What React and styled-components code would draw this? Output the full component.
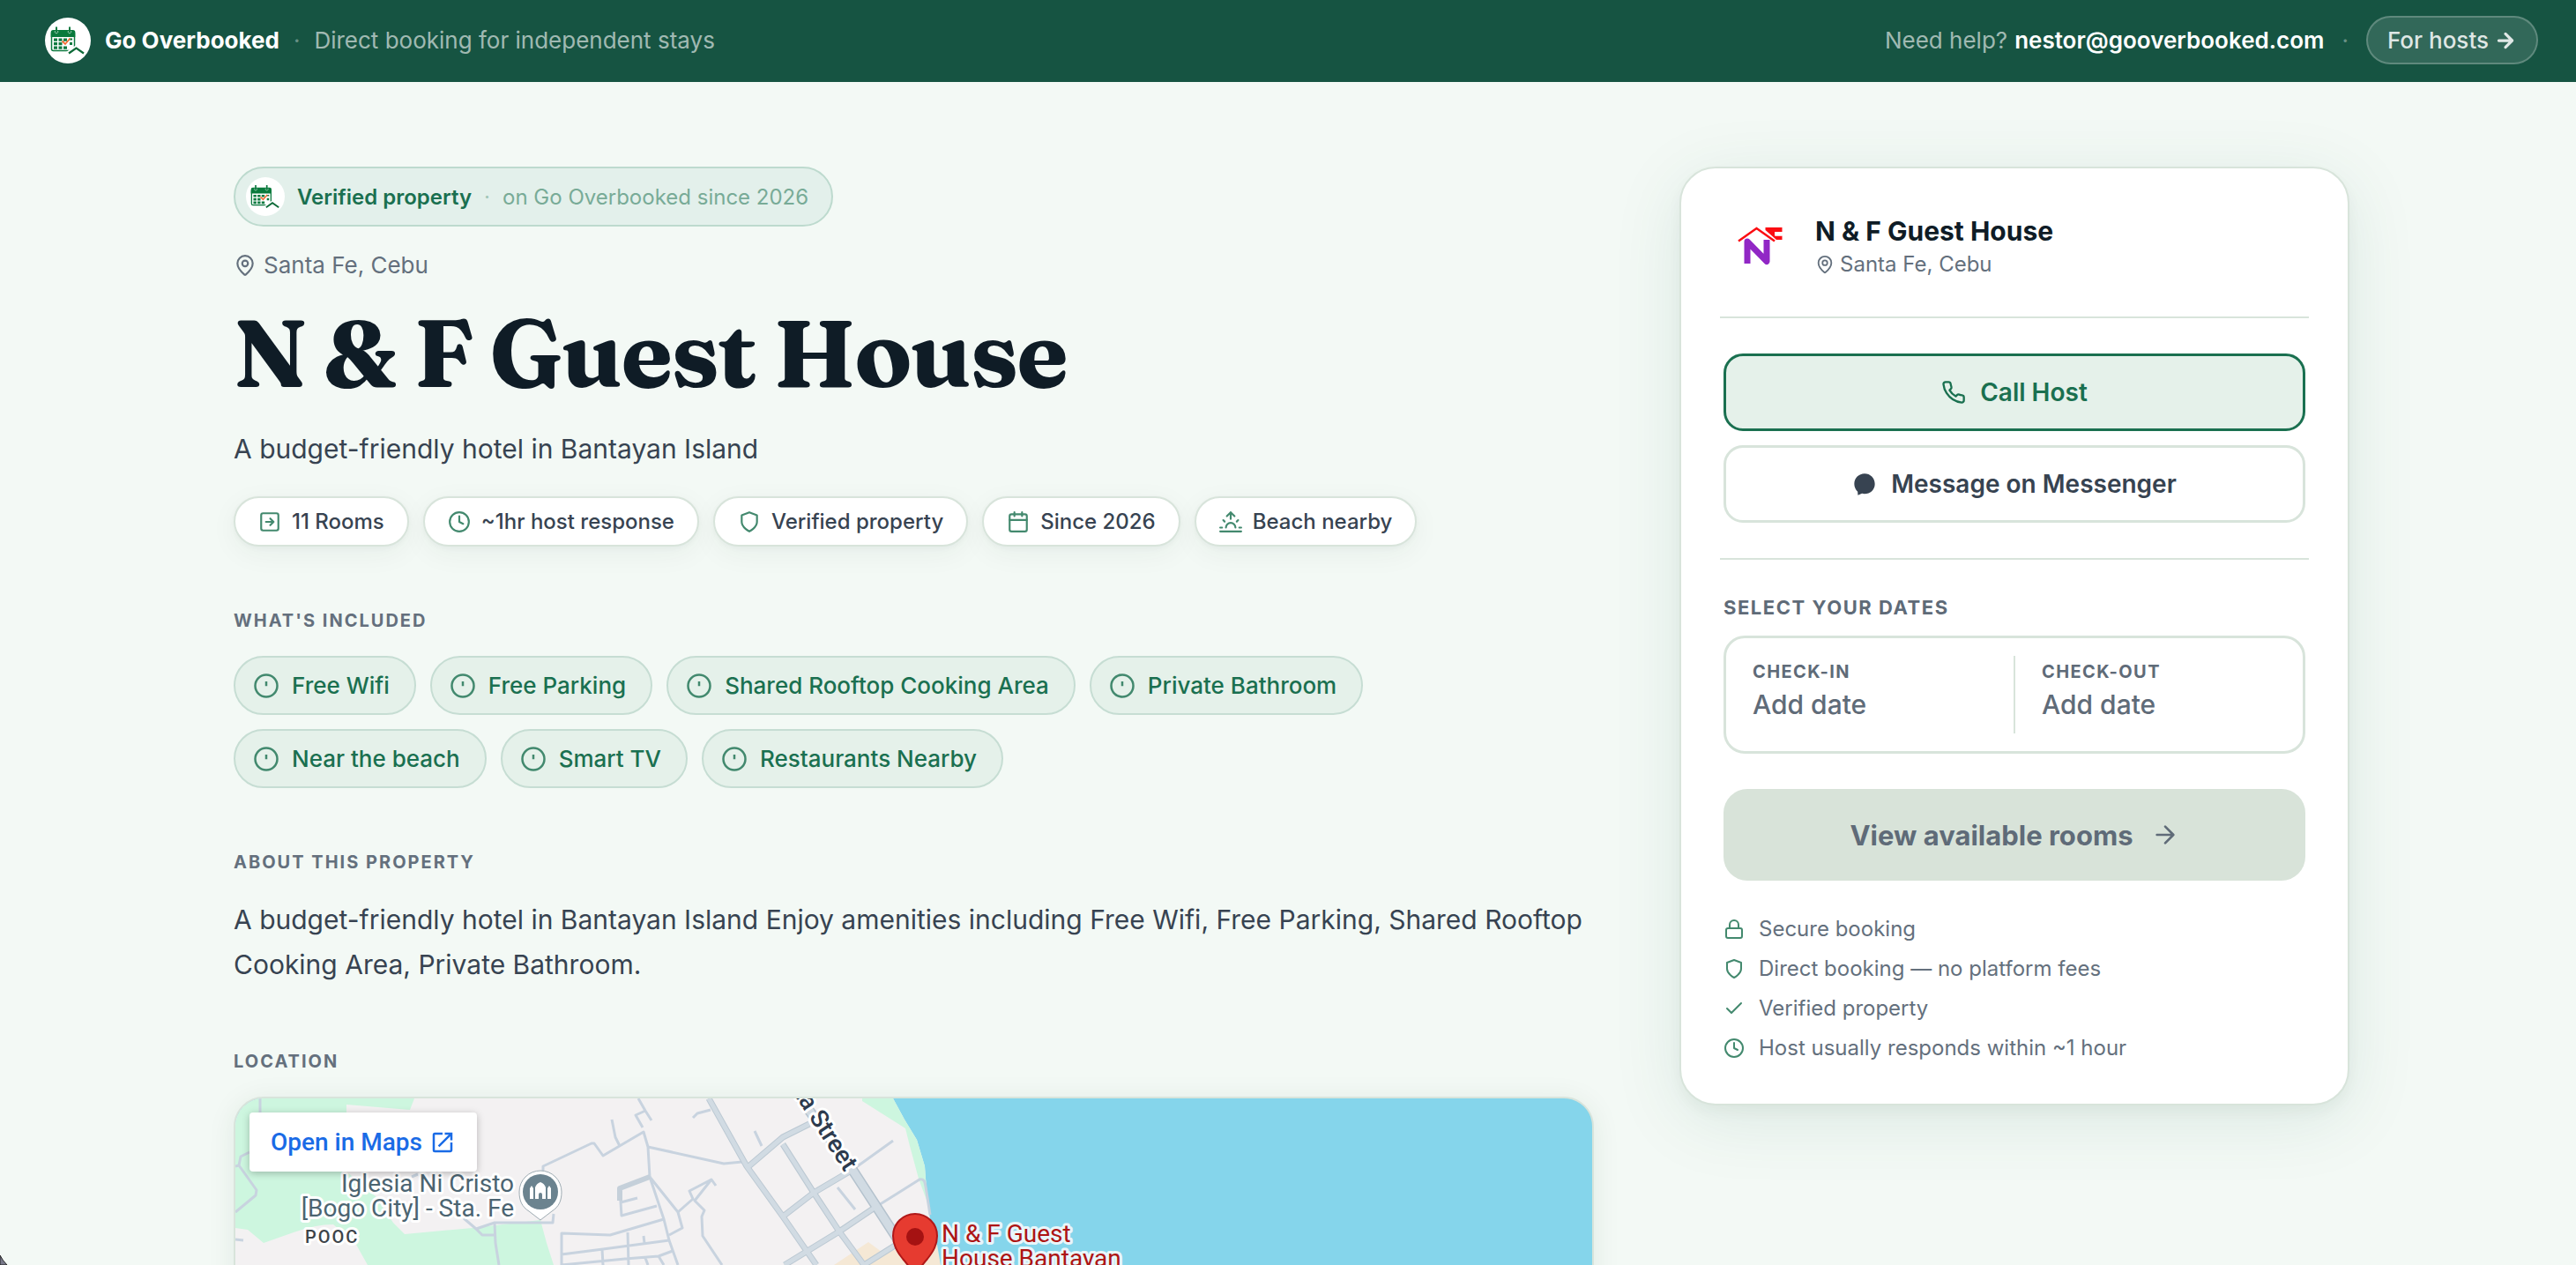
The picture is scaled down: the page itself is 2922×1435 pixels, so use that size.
import React from "react";
import styled, { createGlobalStyle, css } from "styled-components";

const GlobalStyle = createGlobalStyle`
    * { box-sizing: border-box; }
    body {
        margin: 0;
        background: #f3f9f5;
        color: #374351;
        font-family: Inter, "Liberation Sans", sans-serif;
        -webkit-font-smoothing: antialiased;
    }
    h1, h2, p, ul { margin: 0; padding: 0; }
    button { font-family: inherit; cursor: pointer; }
    a { text-decoration: none; color: inherit; }
    svg { display: block; flex-shrink: 0; }
`

const Page = styled.div`
    height: 100vh;
    overflow: hidden;
`

const Header = styled.header`
    display: flex;
    align-items: center;
    justify-content: space-between;
    height: 93px;
    padding: 0 43px 2px 51px;
    background: #165442;
    color: rgba(255, 255, 255, 0.6);
    font-size: 26px;
    line-height: 36px;
`

const HeaderGroup = styled.div`
    display: flex;
    align-items: center;
`

const LogoCircle = styled.span`
    display: flex;
    width: ${(props) => props.size}px;
    height: ${(props) => props.size}px;
    border-radius: 50%;
    overflow: hidden;
    background: white;
`

const Brand = styled.a`
    display: flex;
    align-items: center;
    gap: 16px;
    color: white;
    font-weight: 700;
`

const Dot = styled.span`
    margin: 0 ${(props) => props.space}px;
    opacity: 0.6;
`

const HelpLink = styled.a`
    margin-left: 8px;
    color: white;
    font-weight: 600;
`

const HostsLink = styled.a`
    display: flex;
    align-items: center;
    gap: 6px;
    height: 55px;
    padding: 0 22px;
    border: 2px solid rgba(255, 255, 255, 0.22);
    border-radius: 28px;
    background: rgba(255, 255, 255, 0.12);
    color: rgba(255, 255, 255, 0.85);
    font-weight: 500;
`

const Content = styled.div`
    padding: 96px 0 96px 8px;
`

const Main = styled.main`
    display: flex;
    align-items: flex-start;
    gap: 97px;
    max-width: 2400px;
    margin: 0 auto;
`

const Info = styled.div`
    flex: 1;
    min-width: 0;
`

const Badge = styled.div`
    display: inline-flex;
    align-items: center;
    height: 68px;
    padding: 0 26px 0 12px;
    border: 2px solid #bddace;
    border-radius: 34px;
    background: #e3f0eb;
    color: #78ab97;
    font-size: 24px;
`

const BadgeTitle = styled.b`
    margin-left: 14px;
    color: #1a7050;
    font-weight: 600;
`

const Place = styled.div`
    display: flex;
    align-items: center;
    gap: 8px;
    margin-top: 27px;
    color: #64707d;
    font-size: 26px;
    line-height: 34px;
`

const Title = styled.h1`
    margin-top: 22px;
    color: #0f1c26;
    font-family: Fraunces, "Liberation Serif", serif;
    font-size: 107px;
    font-weight: 700;
    letter-spacing: -2px;
    line-height: 120px;
`

const Tagline = styled.p`
    margin-top: 25px;
    font-size: 30px;
    line-height: 48px;
`

const Facts = styled.ul`
    display: flex;
    flex-wrap: wrap;
    gap: 16px;
    margin-top: 30px;
    list-style: none;
`

const Fact = styled.li`
    display: flex;
    align-items: center;
    gap: 12px;
    height: 57px;
    padding: 0 26px;
    border: 2px solid #d8e4db;
    border-radius: 29px;
    background: white;
    box-shadow: 0 2px 6px rgba(15, 60, 40, 0.04), 0 8px 32px rgba(15, 60, 40, 0.05);
    font-size: 24px;
    font-weight: 500;
    svg { color: #43896e; }
`

const Section = styled.section`
    margin-top: 70px;
`

const SectionTitle = styled.h2`
    margin-bottom: 26px;
    color: #64707d;
    font-size: 20px;
    font-weight: 700;
    letter-spacing: 2px;
    line-height: 28px;
    text-transform: uppercase;
`

const Tags = styled.ul`
    display: flex;
    flex-wrap: wrap;
    gap: 16px;
    list-style: none;
`

const Tag = styled.li`
    display: flex;
    align-items: center;
    gap: 14px;
    height: 67px;
    padding: 0 28px 0 20px;
    border: 2px solid #c6ddd3;
    border-radius: 34px;
    background: #e5f1ea;
    color: #1a7050;
    font-size: 26px;
    font-weight: 500;
    svg { opacity: 0.8; }
`

const About = styled.p`
    font-size: 30px;
    line-height: 51px;
`

const Map = styled.div`
    position: relative;
    height: 560px;
    border: 2px solid #d8e4db;
    border-radius: 34px;
    overflow: hidden;
    background: #85d5eb;
    box-shadow: 0 4px 32px rgba(15, 60, 40, 0.08);
`

const MapLink = styled.a`
    position: absolute;
    top: 16px;
    left: 16px;
    display: flex;
    align-items: center;
    gap: 8px;
    height: 67px;
    padding: 0 24px;
    border-radius: 4px;
    background: white;
    box-shadow: 0 2px 8px rgba(0, 0, 0, 0.25);
    color: #1a6be6;
    font-family: Roboto, sans-serif;
    font-size: 28px;
    font-weight: 500;
`

const Card = styled.aside`
    width: 760px;
    padding: 46px 48px 49px;
    border: 2px solid #d8e4db;
    border-radius: 41px;
    background: white;
    box-shadow: 0 8px 16px rgba(15, 40, 30, 0.04), 0 16px 80px rgba(20, 90, 65, 0.1);
`

const CardHeader = styled.div`
    display: flex;
    align-items: center;
    gap: 22px;
`

const CardName = styled.div`
    padding-top: 4px;
    color: #0f1c26;
    font-size: 30px;
    font-weight: 700;
    line-height: 40px;
`

const CardPlace = styled.div`
    display: flex;
    align-items: center;
    gap: 6px;
    color: #64707d;
    font-size: 24px;
    line-height: 36px;
`

const Divider = styled.hr`
    height: 2px;
    margin: 40px -4px;
    border: none;
    background: #d8e4db;
`

const CardButton = styled.button`
    display: flex;
    align-items: center;
    justify-content: center;
    gap: 16px;
    width: 100%;
    height: 88px;
    border: 3px solid #d8e4db;
    border-radius: 22px;
    background: white;
    color: #374351;
    font-size: 28px;
    font-weight: 600;
    & + & { margin-top: 16px; }
    ${(props) => props.$primary && css`
        border-color: #1a7050;
        background: #e5f1ea;
        color: #1a7050;
    `}
`

const DatesTitle = styled.h2`
    margin-top: -1px;
    margin-bottom: 17px;
    color: #5f6b78;
    font-size: 22px;
    font-weight: 700;
    letter-spacing: 0.07em;
    line-height: 30px;
    text-transform: uppercase;
`

const Dates = styled.div`
    display: flex;
    height: 134px;
    border: 3px solid #d8e4db;
    border-radius: 24px;
`

const DateButton = styled.button`
    flex: 1;
    display: flex;
    flex-direction: column;
    align-items: flex-start;
    gap: 7px;
    padding: 26px 30px;
    border: none;
    background: none;
    color: #5f6b78;
    font-size: 30px;
    font-weight: 500;
    line-height: 36px;
`

const DateLabel = styled.span`
    font-size: 20px;
    font-weight: 700;
    letter-spacing: 0.07em;
    line-height: 24px;
`

const DateDivider = styled.span`
    width: 2px;
    margin: 20px 0;
    background: #d8e4db;
`

const RoomsButton = styled.button`
    display: flex;
    align-items: center;
    justify-content: center;
    gap: 20px;
    width: 100%;
    height: 104px;
    margin: 40px 0 41px;
    border: none;
    border-radius: 27px;
    background: #d8e3d9;
    color: #5f6b78;
    font-size: 31px;
    font-weight: 700;
`

const Perks = styled.ul`
    display: flex;
    flex-direction: column;
    gap: 17px;
    list-style: none;
`

const Perk = styled.li`
    display: flex;
    align-items: center;
    gap: 16px;
    color: #64707d;
    font-size: 24px;
    line-height: 28px;
    svg { color: #43896e; }
`

const WindowCorner = styled.svg`
    position: fixed;
    left: 0;
    bottom: 0;
`

const shapes = {
    pin: <><path d="M20 10c0 5-5.500 10.200-7.400 11.800a1 1 0 0 1-1.200 0C9.500 20.200 4 15 4 10a8 8 0 0 1 16 0" /><circle cx="12" cy="10" r="3" /></>,
    rooms: <><rect x="3" y="3" width="18" height="18" rx="2" /><path d="M8 12h8M12.500 8.500 16 12l-3.500 3.500" /></>,
    clock: <><circle cx="12" cy="12" r="10" /><path d="M12 6v6l4 2" /></>,
    shield: <path d="M12 22s8-4 8-10V5l-8-3-8 3v7c0 6 8 10 8 10z" />,
    calendar: <><rect x="3" y="4" width="18" height="18" rx="2" /><path d="M16 2v4M8 2v4M3 10h18" /></>,
    beach: <path d="M17 18a5 5 0 0 0-10 0M12 2v7M4.220 10.220l1.420 1.420M1 18h2M21 18h2M18.360 11.640l1.420-1.420M23 22H1M8 6l4-4 4 4" />,
    info: <><circle cx="12" cy="12" r="10" /><path d="M12 8v4.200" strokeLinecap="butt" /></>,
    phone: <path d="M22 16.920v3a2 2 0 0 1-2.180 2 19.790 19.790 0 0 1-8.630-3.070 19.500 19.500 0 0 1-6-6 19.790 19.790 0 0 1-3.070-8.670A2 2 0 0 1 4.110 2h3a2 2 0 0 1 2 1.720 12.840 12.840 0 0 0 .7 2.810 2 2 0 0 1-.45 2.110L8.090 9.910a16 16 0 0 0 6 6l1.270-1.270a2 2 0 0 1 2.110-.45 12.840 12.840 0 0 0 2.810.7A2 2 0 0 1 22 16.920z" />,
    chat: <path fill="currentColor" stroke="none" d="M12 2C6.500 2 2 6.300 2 12c0 3 1.300 5.600 3.300 7.400L5.500 23l4-1.700c.8.200 1.600.3 2.500.3 5.500 0 10-4 10-9.700S17.500 2 12 2z" />,
    arrow: <path d="M5 12h14M12 5l7 7-7 7" />,
    lock: <><rect x="3" y="11" width="18" height="11" rx="2" /><path d="M7 11V7a5 5 0 0 1 10 0v4" /></>,
    check: <path d="M20 6 9 17l-5-5" />,
};

const Icon = ({ name, size, width = 2 }) => (
    <svg width={size} height={size} viewBox="0 0 24 24" fill="none" stroke="currentColor" strokeWidth={width} strokeLinecap="round" strokeLinejoin="round" aria-hidden="true">
        {shapes[name]}
    </svg>
);

const CalendarLogo = () => (
    <svg width="100%" height="100%" viewBox="0 0 52 52" aria-hidden="true">
        <rect x="7.500" y="16" width="26" height="21.500" rx="2" fill="white" stroke="#0d7a40" strokeWidth="1.500" />
        <path d="M6.700 22v-5.500a2.500 2.500 0 0 1 2.500-2.500h22.600a2.500 2.500 0 0 1 2.500 2.500V22z" fill="#087a3c" />
        <path d="M13 10.500v6M28 10.500v6" stroke="#0d7a40" strokeWidth="2" />
        <path d="M11.500 15a1.800 1.800 0 1 0 3 0M26.500 15a1.800 1.800 0 1 0 3 0" fill="none" stroke="#b5d8c4" strokeWidth="0.800" />
        <path d="M10 23.500h4v3.200h-4zM15.500 23.500h4v3.200h-4zM21 23.500h4v3.200h-4zM27.500 23.500h3.500v2h-3.500zM10 28h4v3.200h-4zM15.500 28h4v3.200h-4zM28 28h3v3h-3zM10 32.500h4v3.200h-4zM15.500 32.500h4v3.200h-4zM21 32.500h4v3.200h-4z" fill="#0d7a40" />
        <path d="M19.500 26.500l3.500 3.500 5.500-6.500" fill="none" stroke="#f36c32" strokeWidth="1.800" />
        <path d="M24 42l11.500-8L46 41.500" fill="none" stroke="white" strokeWidth="5" />
        <path d="M27 40.500l8.500-6L44 40.500" fill="none" stroke="#0d6a38" strokeWidth="2.200" />
    </svg>
);

const HouseLogo = () => (
    <svg width="82" height="82" viewBox="0 0 82 82" aria-hidden="true">
        <path d="M17 36.500 37.500 22 58 36.500" fill="none" stroke="#fb0d12" strokeWidth="2.500" />
        <path d="M47.500 21h19v5H58v4.500h8.500V35H60L47.500 24z" fill="#fb0d12" />
        <path d="M58 26h8.500v4.500H59z" fill="white" />
        <path d="M27 62V37l22 22.500V35" fill="none" stroke="#9127c5" strokeWidth="7" strokeLinejoin="round" />
    </svg>
);

const minorRoads = [
    "M28 0v16M0 77l4-1 20 28-1 6L0 129M4 76l2-10 10-5M0 160l9 1M207 86l-7 3",
    "M259 136l14 12 21-7h66l1-10M273 148l7 7h14M294 141l1 23 4 25",
    "M457 0l8 14 7 11M465 14l-11 5 8 14M427 24l4 20 5 10",
    "M349 82v-5l55-26h3l10 14 46-27 5 17 2 34 32 40 5 18-15 8M468 55l86 19 21-2",
    "M436 102l2 31 40-11M437 118l19-5M470 89l16 48 6 24 10 28",
    "M502 129l17-15-4-9 25-13 5 7M540 92l-19 24 11 11-3 7 1 22 22 33",
    "M370 189v-36l55 2 61-18M370 177l47-6 75-10M370 189l72-7 38-3 16-6M416 171l1 18M445 152l1 37M465 181l3 8M480 179l6 10M463 156l1 8",
    "M589 37l8 17M683 101l20 25M519 22l5-5 15-4M700 81l46-33M725 124l51-32q6-2 7 8l5 32",
];

const townRoads = "M537 0l43 77 41 57 38 55M580 79l41-35 30-15M621 52l35 55 29 44 28 38M621 134l35-27 44-26M623 189l62-38 40-27M713 189l35-22";

const MapDrawing = () => (
    <svg width="100%" height="560" fontFamily="Roboto, sans-serif" fontSize="28" strokeLinejoin="round">
        <path d="M0 0h746l13 24 14 23 9 30 1 14 3 30 3 26 3 20 7 22v371H0z" fill="#f3f1f2" />
        <path d="M0 0h203l-5 13-72-6v76l33 28 20 30 13 13 77-7 77-9 7 26 8 25H150l-14-25-25-21q-20 0-45 9l-34 12-18-15-14-2zM711 0h35l13 24 14 23 9 30 1 14 3 30-11-30-10-37-5-20-49-31z" fill="#cdf6df" />
        <path d="M679 189l39-26 15 11 63-8 4 23z" fill="#f5e8d5" />
        <g fill="none" stroke="#c8d3df" strokeWidth="3">
            {minorRoads.map((d) => <path key={d} d={d} />)}
        </g>
        <path d="M470 89l-34 13v14" fill="none" stroke="#c5d0da" strokeWidth="6" />
        <path d={townRoads} fill="none" stroke="#bcc9d3" strokeWidth="7" />
        <path d="M638-4l62 85 52 80" fill="none" stroke="#b4c2cd" strokeWidth="12" />
        <path d={townRoads} fill="none" stroke="#d1dbe3" strokeWidth="5" />
        <path d="M638-4l62 85 52 80" fill="none" stroke="#d1dbe3" strokeWidth="9" />
        <g paintOrder="stroke" stroke="white" strokeWidth="6">
            <text x="691" y="84" textAnchor="end" transform="rotate(57 691 84)" fill="#2d3b4e" fontWeight="500">ta Street</text>
            <text x="316" y="106" textAnchor="end" fill="#4b6471">Iglesia Ni Cristo</text>
            <text x="316" y="134" textAnchor="end" fill="#4b6471">[Bogo City] - Sta. Fe</text>
            <text x="79" y="164" fill="#3d4449" fontSize="20" fontWeight="500" letterSpacing="2">POOC</text>
            <text x="801" y="163" fill="#ad1414" stroke="#e9f6fa">N &amp; F Guest</text>
            <text x="801" y="191" fill="#ad1414" stroke="#e9f6fa">House Bantayan</text>
        </g>
        <path d="M346 138l-13-10c-8-5-11-12-11-22a24 24 0 0 1 48 0c0 10-3 17-11 22z" fill="white" stroke="#9eabb2" strokeWidth="1" />
        <circle cx="346" cy="106" r="20" fill="#6b838f" />
        <path d="M334 114v-12l2-3 2 3v12zM354 114v-12l2-3 2 3v12zM340 114v-13c1-3 3-5 6-6 3 1 5 3 6 6v13h-4v-5a2 2 0 0 0-4 0v5z" fill="white" />
        <path d="M771 212c-2-16-7-22-14-30-7-9-11-16-11-26a25 25 0 0 1 50 0c0 10-4 17-11 26-7 8-12 14-14 30z" fill="#e63b30" stroke="#b01818" strokeWidth="2" />
        <circle cx="771" cy="157" r="10" fill="#a51212" />
    </svg>
);

const facts = [
    ["rooms", "11 Rooms"],
    ["clock", "~1hr host response"],
    ["shield", "Verified property"],
    ["calendar", "Since 2026"],
    ["beach", "Beach nearby"],
];

const amenities = [
    "Free Wifi",
    "Free Parking",
    "Shared Rooftop Cooking Area",
    "Private Bathroom",
    "Near the beach",
    "Smart TV",
    "Restaurants Nearby",
];

const perks = [
    ["lock", "Secure booking"],
    ["shield", "Direct booking — no platform fees"],
    ["check", "Verified property"],
    ["clock", "Host usually responds within ~1 hour"],
];

const App = () => {
    return (
        <Page>
            <GlobalStyle />
            <Header>
                <HeaderGroup>
                    <Brand href="#">
                        <LogoCircle size={52}><CalendarLogo /></LogoCircle>
                        Go Overbooked
                    </Brand>
                    <Dot space={16}>·</Dot>
                    <span>Direct booking for independent stays</span>
                </HeaderGroup>
                <HeaderGroup>
                    <span>Need help?</span>
                    <HelpLink href="mailto:nestor@gooverbooked.com">nestor@gooverbooked.com</HelpLink>
                    <Dot space={20}>·</Dot>
                    <HostsLink href="#">For hosts <Icon name="arrow" size={26} width={3} /></HostsLink>
                </HeaderGroup>
            </Header>
            <Content>
                <Main>
                    <Info>
                        <Badge>
                            <LogoCircle size={44}><CalendarLogo /></LogoCircle>
                            <BadgeTitle>Verified property</BadgeTitle>
                            <Dot space={14}>·</Dot>
                            <span>on Go Overbooked since 2026</span>
                        </Badge>
                        <Place><Icon name="pin" size={26} />Santa Fe, Cebu</Place>
                        <Title>N &amp; F Guest House</Title>
                        <Tagline>A budget-friendly hotel in Bantayan Island</Tagline>
                        <Facts>
                            {facts.map(([icon, label]) => (
                                <Fact key={label}><Icon name={icon} size={26} />{label}</Fact>
                            ))}
                        </Facts>
                        <Section>
                            <SectionTitle>What's included</SectionTitle>
                            <Tags>
                                {amenities.map((label) => (
                                    <Tag key={label}><Icon name="info" size={30} />{label}</Tag>
                                ))}
                            </Tags>
                        </Section>
                        <Section>
                            <SectionTitle>About this property</SectionTitle>
                            <About>A budget-friendly hotel in Bantayan Island Enjoy amenities including Free Wifi, Free Parking, Shared Rooftop Cooking Area, Private Bathroom.</About>
                        </Section>
                        <Section>
                            <SectionTitle>Location</SectionTitle>
                            <Map>
                                <MapDrawing />
                                <MapLink href="#">
                                    Open in Maps
                                    <svg width="30" height="30" viewBox="0 0 24 24" fill="currentColor" aria-hidden="true">
                                        <path d="M19 19H5V5h7V3H5a2 2 0 0 0-2 2v14a2 2 0 0 0 2 2h14c1.100 0 2-.9 2-2v-7h-2v7zM14 3v2h3.590l-9.830 9.830 1.410 1.410L19 6.410V10h2V3h-7z" />
                                    </svg>
                                </MapLink>
                            </Map>
                        </Section>
                    </Info>
                    <Card>
                        <CardHeader>
                            <HouseLogo />
                            <div>
                                <CardName>N &amp; F Guest House</CardName>
                                <CardPlace><Icon name="pin" size={22} />Santa Fe, Cebu</CardPlace>
                            </div>
                        </CardHeader>
                        <Divider />
                        <CardButton $primary><Icon name="phone" size={28} />Call Host</CardButton>
                        <CardButton><Icon name="chat" size={28} />Message on Messenger</CardButton>
                        <Divider />
                        <DatesTitle>Select your dates</DatesTitle>
                        <Dates>
                            <DateButton><DateLabel>CHECK-IN</DateLabel>Add date</DateButton>
                            <DateDivider />
                            <DateButton><DateLabel>CHECK-OUT</DateLabel>Add date</DateButton>
                        </Dates>
                        <RoomsButton>View available rooms<Icon name="arrow" size={32} /></RoomsButton>
                        <Perks>
                            {perks.map(([icon, label]) => (
                                <Perk key={label}><Icon name={icon} size={24} />{label}</Perk>
                            ))}
                        </Perks>
                    </Card>
                </Main>
            </Content>
            <WindowCorner width="9" height="12" viewBox="0 0 9 12" aria-hidden="true">
                <path d="M0 1q3 6 8 11H0z" fill="#77788a" stroke="#222" strokeWidth="1" />
            </WindowCorner>
        </Page>
    );
};

export default App;
